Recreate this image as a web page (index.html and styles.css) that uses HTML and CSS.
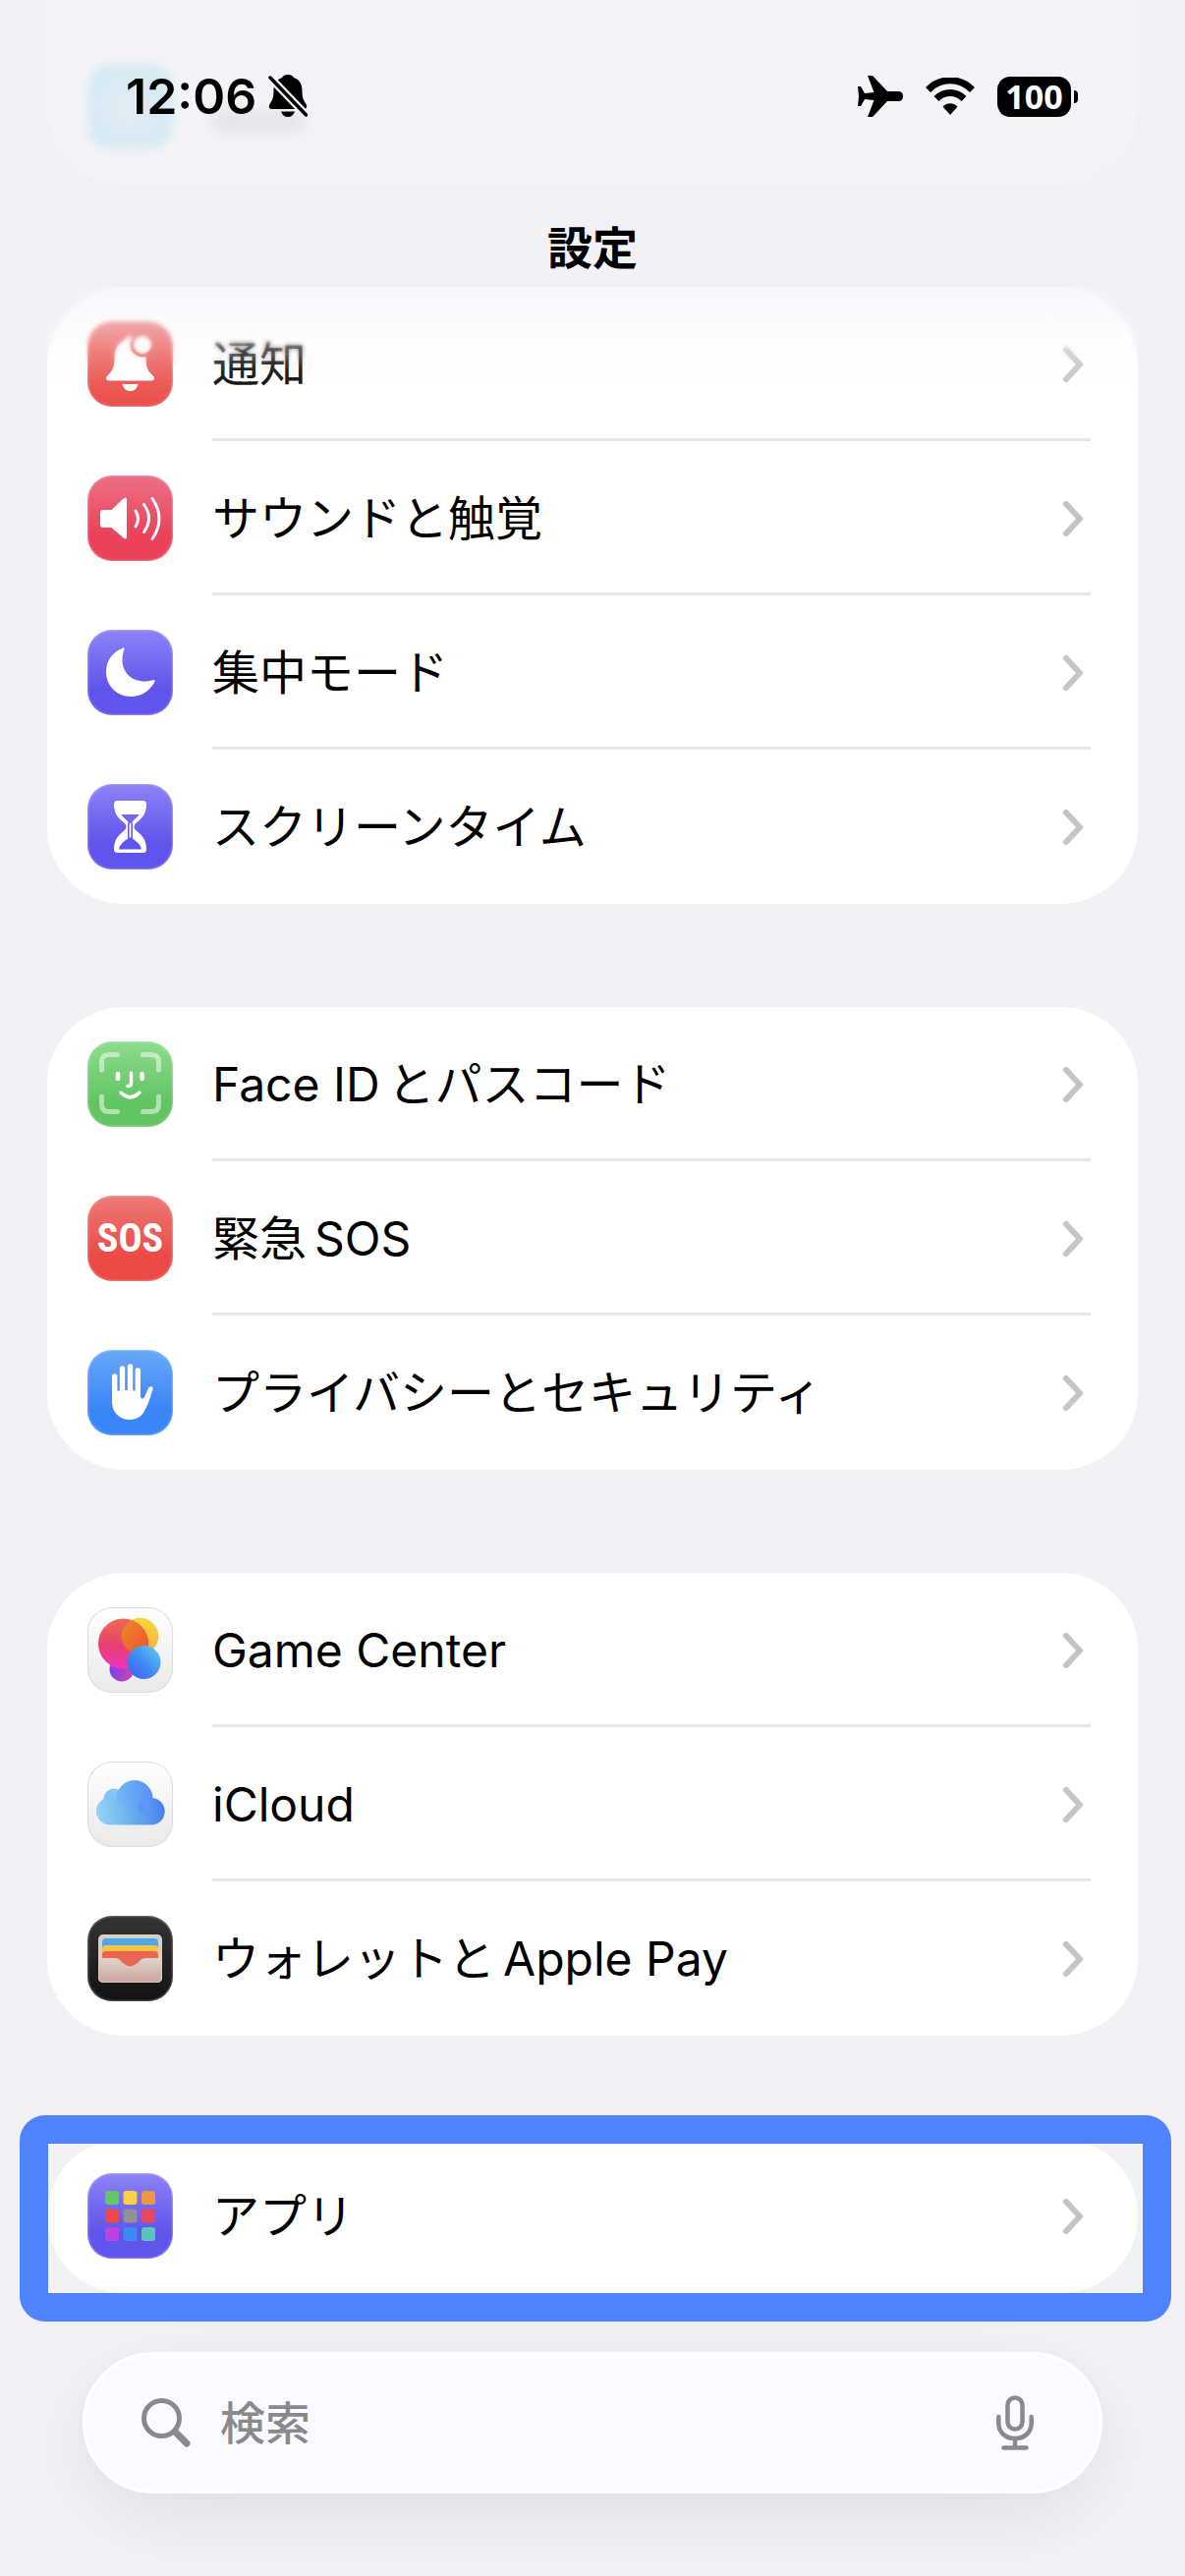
FILE: index.html
```html
<!DOCTYPE html>
<html lang="ja">
<head>
  <meta charset="UTF-8">
  <meta name="viewport" content="width=device-width, initial-scale=1">
  <title>設定</title>
  <link rel="stylesheet" href="styles.css">
</head>
<body>
  <svg class="defs" aria-hidden="true">
    <symbol id="chevron" viewBox="0 0 22 38">
      <path d="M4 4l14 15L4 34" fill="none" stroke="#c5c5c8" stroke-width="6" stroke-linecap="round" stroke-linejoin="round"/>
    </symbol>
  </svg>

  <header class="header">
    <!-- previous group, scrolled under the header -->
    <div class="scrolled" aria-hidden="true">
      <span class="scrolled-icon"></span>
      <span class="scrolled-text"></span>
    </div>
    <div class="status">
      <div class="status-left">
        <span class="time">12:06</span>
        <svg class="mute" viewBox="0 0 40 44" role="img" aria-label="消音">
          <path d="M20 0c-3 0-5 1-6 3C8 5 5.500 10 5.500 16 5.500 24 4 26 1.500 30 0 32.500 1 35 3.500 35h33c2.500 0 3.500-2.500 2-5C36 26 34.500 24 34.500 16 34.500 10 32 5 26 3c-1-2-3-3-6-3zM13 37.500h14c-1 3.500-3.500 5.500-7 5.500s-6-2-7-5.500z"/>
          <path d="M2 3l36.500 38" stroke="#f3f3f8" stroke-width="8"/>
          <path d="M2 3l36.500 38" stroke="#000" stroke-width="3.500" stroke-linecap="round"/>
        </svg>
      </div>
      <div class="status-right">
        <svg class="plane" viewBox="0 0 46 42" role="img" aria-label="機内モード">
          <path d="M10 0h4q1 0 2 1l14 15h11q5 0 5 5t-5 5H30L16 41q-1 1-2 1h-4l6.500-17L7 24l-4 7H0l1-10L0 11h3l4 7 9.500-1z"/>
        </svg>
        <svg class="wifi" viewBox="0 0 50 38" role="img" aria-label="Wi-Fi">
          <path d="M2.500 12.500C15-.5 35-.5 47.500 12.500M11 21.500c8-8 20-8 28 0" fill="none" stroke="#000" stroke-width="7"/>
          <path d="M17.500 29.500c4-4.500 11-4.500 15 0L25 38z"/>
        </svg>
        <div class="battery"><span>100</span></div>
      </div>
    </div>
    <h1>設定</h1>
  </header>

  <main>
    <ul class="card card-under">
      <li><a class="row" href="#">
        <svg class="tile red" viewBox="0 0 87 87" aria-hidden="true">
          <mask id="badge"><path fill="#fff" d="M0 0h87v87H0z"/><circle cx="56" cy="24" r="12.500"/></mask>
          <g fill="#fff">
            <path mask="url(#badge)" d="M43.500 15.500c-3 0-5 2-6 3.500-6 3-10 9-10 18 0 8-1 11-4 15-2 2.500-4.500 4-4.500 6 0 1.500 1 2.500 3 2.500h43c2 0 3-1 3-2.500 0-2-2.500-3.500-4.500-6-3-4-4-7-4-15 0-9-4-15-10-18-1-1.500-3-3.500-6-3.500z"/>
            <circle cx="56" cy="24" r="9"/>
            <path d="M35.500 64h16c-1 4.500-4 7-8 7s-7-2.500-8-7z"/>
          </g>
        </svg>
        <span class="row-body"><span class="label">通知</span><svg class="chevron" aria-hidden="true"><use href="#chevron"/></svg></span>
      </a></li>
      <li><a class="row" href="#">
        <svg class="tile pink" viewBox="0 0 87 87" aria-hidden="true">
          <path fill="#fff" d="M16 35h8.500L36 24q4-3.500 4 1v37q0 4.500-4 1L24.500 53H16q-3 0-3-3V38q0-3 3-3z"/>
          <path fill="none" stroke="#fff" stroke-width="3" stroke-linecap="round" d="M49 36q5 8 0 16M57.500 29.500q10 14 0 28M66 23.500q14 20.500 0 41"/>
        </svg>
        <span class="row-body"><span class="label">サウンドと触覚</span><svg class="chevron" aria-hidden="true"><use href="#chevron"/></svg></span>
      </a></li>
      <li><a class="row" href="#">
        <svg class="tile indigo" viewBox="0 0 87 87" aria-hidden="true">
          <path fill="#fff" d="M36 18.500C25 23 19 32 19 43c0 14 11 25 25 25 11 0 19.500-6 24.500-15 .7-1.500-.5-2.300-2-1.700-3 1-6 1.200-8.500 1.200C45 52.500 35.500 43.500 35.500 31c0-4 .6-7.500 2-11 .5-1.400-.3-2-1.500-1.500z"/>
        </svg>
        <span class="row-body"><span class="label">集中モード</span><svg class="chevron" aria-hidden="true"><use href="#chevron"/></svg></span>
      </a></li>
      <li><a class="row" href="#">
        <svg class="tile indigo" viewBox="0 0 87 87" aria-hidden="true">
          <path fill="#fff" fill-rule="evenodd" d="M30.500 17h26q3.500 0 3.500 3.500c0 8-3 13-8 17-3 2.500-4.500 4-4.500 6s1.500 3.500 4.500 6c5 4 8 9 8 17q0 3.500-3.500 3.500h-26q-3.500 0-3.500-3.500c0-8 3-13 8-17 3-2.500 4.500-4 4.500-6s-1.500-3.500-4.500-6c-5-4-8-9-8-17q0-3.500 3.500-3.500zM34.500 31c2 4 7 6 7.500 9h3c.5-3 5.500-5 7.500-9zM32 66.500h23c-1.500-7-7-8.500-10-12h-3c-3 3.500-8.500 5-10 12z"/>
          <path fill="none" stroke="#6256ee" stroke-width="1.500" d="M41.800 39.500v16M45.200 39.500v16"/>
        </svg>
        <span class="row-body"><span class="label">スクリーンタイム</span><svg class="chevron" aria-hidden="true"><use href="#chevron"/></svg></span>
      </a></li>
    </ul>

    <ul class="card">
      <li><a class="row" href="#">
        <svg class="tile green" viewBox="0 0 87 87" aria-hidden="true">
          <g fill="none" stroke="#fff" stroke-linecap="round">
            <path stroke-width="5" opacity=".5" d="M14.500 29v-8q0-7.500 7.500-7.500h8.500M56.500 13.500H65q7.500 0 7.500 7.500v8M72.500 56v8q0 7.500-7.500 7.500h-8.500M30.500 71.500H22q-7.500 0-7.500-7.500v-8"/>
            <path stroke-width="4.500" d="M31 33v5M55.500 33v5"/>
            <path stroke-width="3.500" d="M44.500 32v10.500q0 3-3.500 3M34 52q9.500 9.500 19 0"/>
          </g>
        </svg>
        <span class="row-body"><span class="label"><span class="latin-start">Face ID</span>とパスコード</span><svg class="chevron" aria-hidden="true"><use href="#chevron"/></svg></span>
      </a></li>
      <li><a class="row" href="#">
        <span class="tile red sos" aria-hidden="true">SOS</span>
        <span class="row-body"><span class="label">緊急<span class="latin-end">SOS</span></span><svg class="chevron" aria-hidden="true"><use href="#chevron"/></svg></span>
      </a></li>
      <li><a class="row" href="#">
        <svg class="tile blue" viewBox="0 0 87 87" aria-hidden="true">
          <path fill="none" stroke="#fff" stroke-width="5.400" stroke-linecap="round" d="M27.700 27v25M35.500 19v27M43.500 17v29M51.300 21v27"/>
          <path fill="#fff" d="M25 44q5-3 11-3h7q7 0 11 3v4q2 4 4.500-1l3.500-8q1.500-2.500 3.500-1.500t.5 4C63 52 60 60 55.500 66 50 72 39 72.500 32.500 68 26 63 25 58 25 51z"/>
        </svg>
        <span class="row-body"><span class="label">プライバシーとセキュリティ</span><svg class="chevron" aria-hidden="true"><use href="#chevron"/></svg></span>
      </a></li>
    </ul>

    <ul class="card">
      <li><a class="row" href="#">
        <svg class="tile light" viewBox="0 0 87 87" aria-hidden="true">
          <defs>
            <linearGradient id="gc-red" x2="0" y2="1"><stop stop-color="#ea6a50"/><stop offset=".55" stop-color="#e83f71"/><stop offset="1" stop-color="#ef35c0"/></linearGradient>
            <linearGradient id="gc-yellow" x2="0" y2="1"><stop stop-color="#fbd53b"/><stop offset="1" stop-color="#f2ae45"/></linearGradient>
            <linearGradient id="gc-orange" x2="1" y2="1"><stop stop-color="#ee8a2c"/><stop offset="1" stop-color="#ea4a2c"/></linearGradient>
            <linearGradient id="gc-blue" y1="1" x2="1" y2="0"><stop stop-color="#3f5df0"/><stop offset=".5" stop-color="#418df2"/><stop offset="1" stop-color="#66d2f3"/></linearGradient>
            <linearGradient id="gc-purple" x2="1"><stop stop-color="#7f3bf0"/><stop offset="1" stop-color="#cf4aa8"/></linearGradient>
            <clipPath id="gc-clip"><circle cx="36.500" cy="37" r="25.500"/></clipPath>
          </defs>
          <circle cx="35" cy="63" r="12.500" fill="url(#gc-purple)"/>
          <circle cx="53.500" cy="29.500" r="18.700" fill="url(#gc-yellow)"/>
          <circle cx="36.500" cy="37" r="25.500" fill="url(#gc-red)"/>
          <circle cx="53.500" cy="29.500" r="18.700" fill="url(#gc-orange)" clip-path="url(#gc-clip)"/>
          <circle cx="57.500" cy="56" r="17" fill="url(#gc-blue)"/>
        </svg>
        <span class="row-body"><span class="label">Game Center</span><svg class="chevron" aria-hidden="true"><use href="#chevron"/></svg></span>
      </a></li>
      <li><a class="row" href="#">
        <svg class="tile light" viewBox="0 0 87 87" aria-hidden="true">
          <defs>
            <linearGradient id="cloud" gradientUnits="userSpaceOnUse" x1="9" y1="56" x2="78" y2="48"><stop stop-color="#97d5f4"/><stop offset=".5" stop-color="#68b1ef"/><stop offset="1" stop-color="#4a80ee"/></linearGradient>
            <linearGradient id="puff" x2="1"><stop stop-color="#70b8f6"/><stop offset="1" stop-color="#5a91f6"/></linearGradient>
          </defs>
          <circle cx="27" cy="38" r="10.500" fill="#85c6f6"/>
          <circle cx="48" cy="37.500" r="18.500" fill="url(#puff)"/>
          <path fill="url(#cloud)" d="M23 64.500a14 14 0 1 1 11-22.500c6 2 12 9 21 7 0-6 4-12 10-12a13.700 13.700 0 0 1 0 27.500z"/>
          <ellipse cx="58" cy="46" rx="6" ry="7" fill="#5f96f5" transform="rotate(35 58 46)"/>
        </svg>
        <span class="row-body"><span class="label">iCloud</span><svg class="chevron" aria-hidden="true"><use href="#chevron"/></svg></span>
      </a></li>
      <li><a class="row" href="#">
        <svg class="tile black" viewBox="0 0 87 87" aria-hidden="true">
          <defs>
            <linearGradient id="pocket" x2="0" y2="1"><stop stop-color="#dfd4cc"/><stop offset="1" stop-color="#cda49c"/></linearGradient>
          </defs>
          <rect x="11" y="19" width="65" height="49" rx="5" fill="#d8d0c5"/>
          <path fill="#50a4ea" d="M15 27q0-4 4-4h49q4 0 4 4v8H15z"/>
          <path fill="#f1c544" d="M15 33q0-3 4-3h49q4 0 4 3v8H15z"/>
          <path fill="#ea6652" d="M15 39q0-3 4-3h49q4 0 4 3v15H15z"/>
          <path fill="url(#pocket)" stroke="#d8d0c5" d="M11.500 43.500H27c5 0 6 2 9 5 5 4.500 10 4.500 15 0 3-3 4-5 9-5h15.500V63q0 4.500-4.500 4.500H16q-4.500 0-4.500-4.500z"/>
        </svg>
        <span class="row-body"><span class="label">ウォレットと<span class="latin-end">Apple Pay</span></span><svg class="chevron" aria-hidden="true"><use href="#chevron"/></svg></span>
      </a></li>
    </ul>

    <ul class="card highlighted">
      <li><a class="row" href="#">
        <svg class="tile indigo" viewBox="0 0 87 87" aria-hidden="true">
          <rect x="18" y="18" width="14" height="14" rx="3" fill="#66c667"/>
          <rect x="36.500" y="18" width="14" height="14" rx="3" fill="#f8cf47"/>
          <rect x="55" y="18" width="14" height="14" rx="3" fill="#f09645"/>
          <rect x="18" y="36.500" width="14" height="14" rx="3" fill="#ea4b4a"/>
          <rect x="36.500" y="36.500" width="14" height="14" rx="3" fill="#919195"/>
          <rect x="55" y="36.500" width="14" height="14" rx="3" fill="#e94660"/>
          <rect x="18" y="55" width="14" height="14" rx="3" fill="#bb45dc"/>
          <rect x="36.500" y="55" width="14" height="14" rx="3" fill="#3d8af7"/>
          <rect x="55" y="55" width="14" height="14" rx="3" fill="#5bc4b7"/>
        </svg>
        <span class="row-body"><span class="label">アプリ</span><svg class="chevron" aria-hidden="true"><use href="#chevron"/></svg></span>
      </a></li>
    </ul>
  </main>

  <form class="search" role="search">
    <svg class="glass" viewBox="0 0 50 50" aria-hidden="true">
      <path d="M34.500 34.500L46 46" stroke="#8a8a8e" stroke-width="7" stroke-linecap="round"/>
      <circle cx="20.500" cy="20.500" r="18" fill="none" stroke="#8a8a8e" stroke-width="5"/>
    </svg>
    <input type="search" placeholder="検索" aria-label="検索">
    <button type="button" class="mic" aria-label="音声入力">
      <svg viewBox="0 0 38 56" fill="none" stroke="#8a8a8e" stroke-width="4.500" stroke-linecap="round">
        <rect x="11.500" y="2.500" width="15" height="32" rx="7.500"/>
        <path d="M2.300 22v6c0 10 7 16 16.700 16s16.700-6 16.700-16v-6M19 44v9M7.500 53.500h23"/>
      </svg>
    </button>
  </form>
</body>
</html>
```
FILE: styles.css
```css
* {
  box-sizing: border-box;
}

body {
  margin: 0;
  min-height: 100vh;
  background: #f1f1f6;
  color: #000;
  font-family: Inter, "Noto Sans CJK JP", sans-serif;
  overflow-x: hidden;
}

.defs {
  display: none;
}

/* header */
.header {
  position: relative;
  height: 292px;
}

.scrolled {
  position: absolute;
  inset: 0 48px auto;
  height: 187px;
  padding: 65px 41px 0;
  display: flex;
  gap: 40px;
  background: #f4f4f8;
  border-radius: 0 0 78px 78px;
}

.scrolled-icon {
  width: 87px;
  height: 87px;
  border-radius: 24px;
  background: radial-gradient(#e4ebf5, #d6eaf3 70%);
  filter: blur(4px);
}

.scrolled-text {
  width: 94px;
  height: 20px;
  margin-top: 48px;
  border-radius: 10px;
  background: #e3e3e7;
  filter: blur(7px);
}

.status {
  position: relative;
  display: flex;
  justify-content: space-between;
  align-items: center;
  height: 196px;
  padding: 0 109px 0 128px;
}

.status-left,
.status-right {
  display: flex;
  align-items: center;
}

.status-left {
  gap: 12px;
}

.status-right {
  gap: 23px;
}

.time {
  font-size: 50px;
  font-weight: 600;
  line-height: 60px;
}

.mute {
  width: 40px;
  height: 44px;
}

.plane {
  width: 46px;
  height: 42px;
}

.wifi {
  width: 50px;
  height: 38px;
}

.battery {
  position: relative;
  width: 75px;
  height: 41px;
  margin-right: 7px;
  border-radius: 13px;
  background: #000;
  color: #fff;
  font-size: 34px;
  font-weight: 700;
  line-height: 40px;
  text-align: center;
  font-family: "Open Sans", sans-serif;
}

.battery::after {
  content: "";
  position: absolute;
  top: 14px;
  right: -7px;
  width: 4px;
  height: 13px;
  border-radius: 0 4px 4px 0;
  background: #000;
}

h1 {
  position: relative;
  margin: 0;
  padding-top: 20px;
  font-size: 46px;
  font-weight: 700;
  line-height: 72px;
  text-align: center;
}

/* settings groups */
main {
  display: flex;
  flex-direction: column;
  gap: 105px;
  padding: 0 48px;
}

.card {
  position: relative;
  margin: 0;
  padding: 0;
  list-style: none;
  background: #fff;
  border-radius: 78px;
}

.card-under::before,
.card-under::after {
  content: "";
  position: absolute;
  inset: 0 0 auto;
  z-index: 1;
  pointer-events: none;
}

.card-under::before {
  height: 84px;
  backdrop-filter: blur(2px);
  mask-image: linear-gradient(#000 60%, transparent);
}

.card-under::after {
  height: 130px;
  background: linear-gradient(rgba(243, 243, 248, 0.6), rgba(250, 250, 252, 0.2) 50%, rgba(255, 255, 255, 0));
}

.row {
  display: flex;
  align-items: center;
  gap: 40px;
  height: 157px;
  padding: 0 48px 0 41px;
  color: inherit;
  text-decoration: none;
}

.row-body {
  flex: 1;
  align-self: stretch;
  display: flex;
  align-items: center;
  justify-content: space-between;
  padding-right: 7px;
}

li:not(:last-child) .row-body {
  box-shadow: inset 0 -3px #e6e6e6;
}

.label {
  font-size: 48px;
  line-height: 70px;
  white-space: nowrap;
}

/* gap between latin and japanese text */
.latin-start {
  margin-right: 8px;
}

.latin-end {
  margin-left: 8px;
}

.chevron {
  width: 22px;
  height: 38px;
}

.tile {
  flex: none;
  width: 87px;
  height: 87px;
  border-radius: 25px;
  box-shadow: inset 0 0 2px 1px rgba(255, 255, 255, 0.3);
}

.red {
  background: linear-gradient(#ed7a78, #ea4b46 70%);
}

.pink {
  background: linear-gradient(#ec6f87, #ea4259 70%);
}

.indigo {
  background: linear-gradient(#8c83f8, #5f54eb 70%);
}

.green {
  background: linear-gradient(#8edc8f, #63c463 70%);
}

.blue {
  background: linear-gradient(#67a9f9, #3a85f7 70%);
}

.light {
  background: linear-gradient(#fff, #e9e9ea);
  box-shadow: inset 0 0 0 1px #dcdcde;
}

.black {
  background: linear-gradient(#343434, #121212);
}

.sos {
  display: flex;
  align-items: center;
  justify-content: center;
  color: #fff;
  font-family: "Liberation Sans Narrow", "Roboto Condensed", "Open Sans Condensed", Roboto, sans-serif;
  font-size: 40px;
  font-weight: 700;
  line-height: 44px;
}

/* callout frame around the row */
.highlighted::after {
  content: "";
  position: absolute;
  inset: -24px -34px -29px -28px;
  border: 29px solid #4f83ff;
  border-radius: 26px;
  pointer-events: none;
}

/* search bar */
.search {
  display: flex;
  align-items: center;
  height: 144px;
  margin: 60px 84px 84px;
  padding: 0 67px 0 57px;
  background: #fbfbff;
  border: 3px solid #fff;
  border-radius: 72px;
  box-shadow: 0 24px 90px rgba(0, 0, 0, 0.08);
}

.search input {
  flex: 1;
  min-width: 0;
  margin: 0 30px;
  padding: 0;
  border: 0;
  outline: none;
  background: none;
  font-family: inherit;
  font-size: 46px;
  font-weight: 500;
  line-height: 70px;
}

.search input::placeholder {
  color: #8a8a8e;
  opacity: 1;
}

.glass {
  width: 50px;
  height: 50px;
}

.mic {
  display: flex;
  padding: 0;
  border: 0;
  background: none;
}

.mic svg {
  width: 38px;
  height: 56px;
}
```
